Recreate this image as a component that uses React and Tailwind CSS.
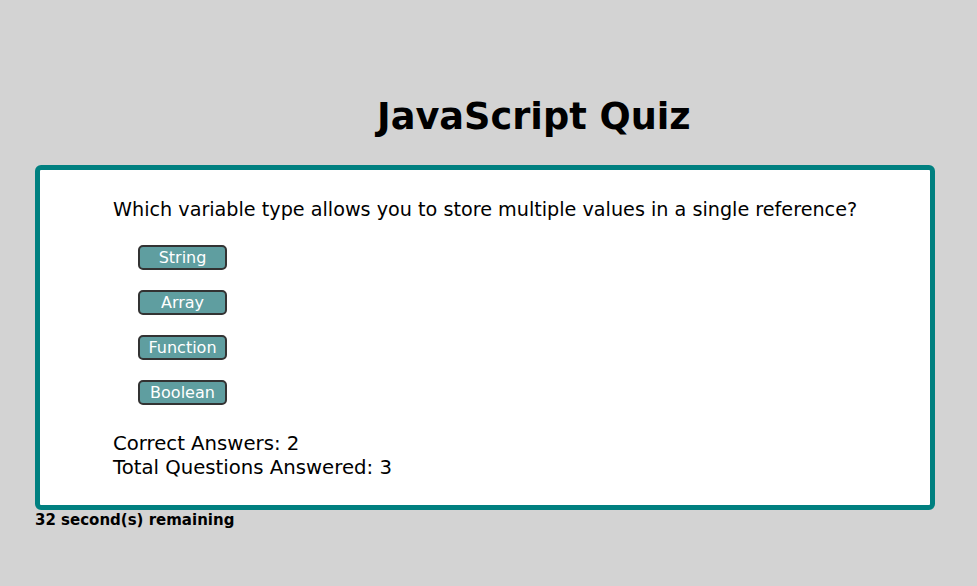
export default function App() {
  const opts = ["String", "Array", "Function", "Boolean"];
  return (
    <div className="min-h-[586px] w-full bg-[#d3d3d3] text-black" style={{ fontFamily: '"DejaVu Sans", sans-serif' }}>
      <div className="pt-[94px] pl-[377px]">
        <h1 className="text-[36.7px] font-bold leading-[46px] m-0">JavaScript Quiz</h1>
      </div>
      <div className="mx-[35px] mt-[25px] w-[900px] h-[345px] border-[5px] border-[#008080] rounded-[6px] bg-white pl-[73px] pt-[28px]">
        <p className="text-[19.2px] leading-[24px]">Which variable type allows you to store multiple values in a single reference?</p>
        <div className="flex flex-col gap-[20px] pl-[25px] pt-[23px]">
          {opts.map((o) => (
            <button key={o} className="w-[89px] h-[25px] rounded-[5px] border-2 border-[#333] bg-[#5f9ea0] text-white text-[16px] leading-[20px]">
              {o}
            </button>
          ))}
        </div>
        <div className="pt-[27px] text-[19.7px] leading-[24px]">
          <div>Correct Answers: 2</div>
          <div>Total Questions Answered: 3</div>
        </div>
      </div>
      <div className="pl-[35px] text-[15px] font-bold leading-[20px]">32 second(s) remaining</div>
    </div>
  );
}
